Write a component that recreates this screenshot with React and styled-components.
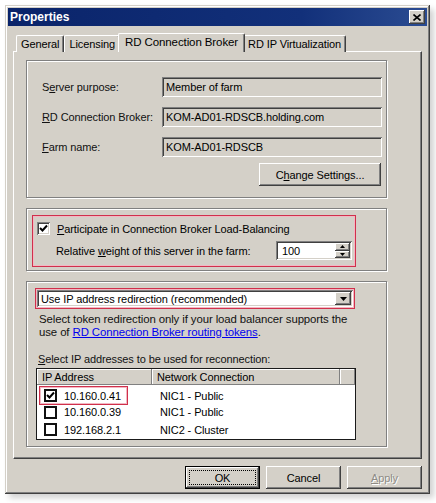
import React from 'react';
import styled, { createGlobalStyle, css } from 'styled-components';

const GlobalStyle = createGlobalStyle`
  html, body {
    margin: 0;
    padding: 0;
    background: #ffffff;
  }
  body {
    font-family: "Liberation Sans", Arial, sans-serif;
    font-size: 11px;
    letter-spacing: -0.1px;
    color: #000;
  }
`;

const face = '#d4d0c8';

const raised = css`
  box-shadow: inset -1px -1px #404040, inset 1px 1px #ffffff,
    inset -2px -2px #808080, inset 2px 2px ${face};
`;

const sunken = css`
  box-shadow: inset 1px 1px #808080, inset -1px -1px #ffffff,
    inset 2px 2px #404040, inset -2px -2px ${face};
`;

const Page = styled.div`
  padding: 5px 0 0 5px;
  width: 436px;
  height: 503px;
  box-sizing: border-box;
`;

const Window = styled.div`
  width: 425px;
  height: 489px;
  box-sizing: border-box;
  padding: 3px;
  background: ${face};
  box-shadow: inset -1px -1px #404040, inset 1px 1px ${face},
    inset -2px -2px #808080, inset 2px 2px #ffffff,
    4px 4px 6px rgba(0, 0, 0, 0.18);
  display: flex;
  flex-direction: column;
`;

const TitleBar = styled.div`
  height: 18px;
  background: linear-gradient(to right, #0a246a 0%, #12307a 70%, #2b4c92 100%);
  display: flex;
  align-items: center;
  justify-content: space-between;
  padding: 0 2px;
`;

const Title = styled.span`
  color: #fff;
  font-weight: bold;
  font-size: 12px;
  letter-spacing: 0;
`;

const CloseBox = styled.div`
  width: 16px;
  height: 14px;
  background: ${face};
  ${raised};
  display: flex;
  align-items: center;
  justify-content: center;
`;

const Body = styled.div`
  padding: 7px 5px 0 5px;
  display: flex;
  flex-direction: column;
  flex: 1;
`;

const TabStrip = styled.div`
  display: flex;
  align-items: flex-end;
  padding-left: 3px;
  height: 19px;
  position: relative;
  z-index: 1;
`;

const Tab = styled.div`
  height: ${(p) => (p.$active ? 19 : 17)}px;
  padding: 0 ${(p) => (p.$active ? 6 : 4)}px;
  margin: 0 ${(p) => (p.$active ? -2 : 0)}px;
  padding-bottom: ${(p) => (p.$active ? 2 : 0)}px;
  box-sizing: border-box;
  display: flex;
  align-items: center;
  background: ${face};
  border-top: 1px solid #fff;
  border-left: 1px solid #fff;
  border-right: 1px solid #404040;
  box-shadow: inset -1px 0 #808080;
  border-radius: 2px 2px 0 0;
  font-size: ${(p) => (p.$active ? 11.5 : 11)}px;
  position: relative;
  z-index: ${(p) => (p.$active ? 2 : 1)};
`;

const TabPage = styled.div`
  height: 408px;
  box-sizing: border-box;
  margin-top: -1px;
  border-top: 1px solid #fff;
  border-left: 1px solid #fff;
  border-right: 1px solid #404040;
  border-bottom: 1px solid #404040;
  box-shadow: inset -1px -1px #808080;
  padding: 8px 34px 0 12px;
  display: flex;
  flex-direction: column;
  gap: 10px;
`;

const Group = styled.div`
  border: 1px solid #808080;
  box-shadow: inset 1px 1px #fff, 1px 1px #fff;
  height: ${(p) => p.$h}px;
  box-sizing: border-box;
  padding: ${(p) => p.$pad};
  display: flex;
  flex-direction: column;
`;

const FieldRow = styled.div`
  display: flex;
  align-items: center;
  height: 20px;
  margin-bottom: 10px;
`;

const FieldLabel = styled.span`
  width: 120px;
  color: #111;
`;

const ReadOnlyBox = styled.div`
  width: 220px;
  height: 20px;
  box-sizing: border-box;
  ${sunken};
  display: flex;
  align-items: center;
  padding-left: 4px;
`;

const Key = styled.span`
  text-decoration: underline;
  text-underline-offset: 1px;
`;

const PushButton = styled.button`
  width: ${(p) => p.$w}px;
  height: 23px;
  background: ${face};
  border: none;
  padding: 0;
  font-family: inherit;
  font-size: 11px;
  letter-spacing: -0.1px;
  color: ${(p) => (p.$disabled ? '#8e8b85' : '#000')};
  text-shadow: ${(p) => (p.$disabled ? '1px 1px #fff' : 'none')};
  ${(p) =>
    p.$default
      ? css`
          box-shadow: inset 0 0 0 1px #000, inset -2px -2px #404040,
            inset 2px 2px #ffffff, inset -3px -3px #808080;
        `
      : raised};
  display: flex;
  align-items: center;
  justify-content: center;
  position: relative;
`;

const FocusRing = styled.span`
  position: absolute;
  inset: 4px;
  border: 1px dotted #000;
`;

const ButtonEnd = styled.div`
  display: flex;
  justify-content: flex-end;
  padding-right: 5px;
  margin-top: -4px;
`;

const Annotation = styled.div`
  border: 1px solid #d0304c;
  box-shadow: inset 0 0 0 1px #f2b8c2;
  box-sizing: border-box;
`;

const LoadBalanceBox = styled(Annotation)`
  width: 324px;
  height: 52px;
  padding: 6px 0 0 4px;
  display: flex;
  flex-direction: column;
  gap: 6px;
`;

const CheckRow = styled.div`
  display: flex;
  align-items: center;
  gap: 7px;
`;

const Check3D = styled.div`
  width: 13px;
  height: 13px;
  box-sizing: border-box;
  background: #fff;
  ${sunken};
  display: flex;
  align-items: center;
  justify-content: center;
`;

const WeightRow = styled.div`
  display: flex;
  align-items: center;
  padding-left: 19px;
`;

const SpinBox = styled.div`
  margin-left: auto;
  margin-right: 3px;
  width: 76px;
  height: 19px;
  box-sizing: border-box;
  background: #fff;
  ${sunken};
  display: flex;
  align-items: center;
  padding: 2px 2px 2px 6px;
`;

const SpinButtons = styled.div`
  margin-left: auto;
  width: 15px;
  height: 15px;
  display: flex;
  flex-direction: column;
`;

const SpinPart = styled.div`
  flex: 1;
  background: ${face};
  ${raised};
  display: flex;
  align-items: center;
  justify-content: center;
`;

const ComboWrap = styled(Annotation)`
  width: 320px;
  height: 21px;
  padding: 1px;
  margin-left: -1px;
`;

const Combo = styled.div`
  height: 100%;
  background: #fff;
  ${sunken};
  display: flex;
  align-items: center;
  padding: 2px;
  box-sizing: border-box;
`;

const ComboText = styled.span`
  flex: 1;
  padding-left: 2px;
`;

const DropButton = styled.div`
  width: 16px;
  height: 100%;
  background: ${face};
  ${raised};
  display: flex;
  align-items: center;
  justify-content: center;
`;

const Hint = styled.p`
  margin: 4px 0 0 3px;
  font-size: 11.4px;
  line-height: 13px;
  color: #111;
`;

const LinkText = styled.a`
  color: #0000ee;
  text-decoration: underline;
`;

const ListCaption = styled.div`
  margin: 14px 0 3px 2px;
  color: #111;
`;

const ListView = styled.div`
  width: 320px;
  height: 72px;
  box-sizing: border-box;
  border: 1px solid #1a1a1a;
  background: #fff;
`;

const HeaderRow = styled.div`
  display: grid;
  grid-template-columns: 115px 188px 1fr;
  height: 16px;
  margin-bottom: 1px;
`;

const HeaderCell = styled.div`
  background: ${face};
  box-shadow: inset -1px -1px #808080, inset 1px 1px #fff;
  padding-left: 5px;
  display: flex;
  align-items: center;
  overflow: hidden;
  white-space: nowrap;
`;

const ItemRow = styled.div`
  display: grid;
  grid-template-columns: 115px 188px;
  height: 17.5px;
  align-items: center;
`;

const ItemCell = styled.div`
  display: flex;
  align-items: center;
  gap: 7px;
  padding-left: ${(p) => p.$pad || 0}px;
`;

const ItemMark = styled(Annotation)`
  display: flex;
  align-items: center;
  gap: 7px;
  height: 19px;
  width: 89px;
  margin-left: 2px;
  padding-left: 4px;
`;

const ListCheck = styled.div`
  width: 13px;
  height: 13px;
  box-sizing: border-box;
  border: 2px solid #111;
  background: #fff;
  display: flex;
  align-items: center;
  justify-content: center;
`;

const Footer = styled.div`
  display: flex;
  justify-content: flex-end;
  gap: 6px;
  padding-top: 7px;
`;

const Tick = () => (
  <svg width="9" height="9" viewBox="0 0 9 9">
    <path d="M1 4 L3.5 6.5 L8 1.5" stroke="#000" strokeWidth="2" fill="none" />
  </svg>
);

const Arrow = ({ up, size = 7 }) => (
  <svg width={size} height={Math.ceil(size / 2)} viewBox="0 0 7 4">
    <path d={up ? 'M0 4 L3.5 0 L7 4 Z' : 'M0 0 L7 0 L3.5 4 Z'} fill="#000" />
  </svg>
);

const CloseGlyph = () => (
  <svg width="8" height="7" viewBox="0 0 8 7">
    <path d="M0.5 0.5 L7.5 6.5 M7.5 0.5 L0.5 6.5" stroke="#000" strokeWidth="1.6" />
  </svg>
);

const addresses = [
  { ip: '10.160.0.41', nic: 'NIC1 - Public', on: true },
  { ip: '10.160.0.39', nic: 'NIC1 - Public', on: false },
  { ip: '192.168.2.1', nic: 'NIC2 - Cluster', on: false },
];

function AddressRow({ item }) {
  const box = <ListCheck>{item.on && <Tick />}</ListCheck>;
  return (
    <ItemRow>
      {item.on ? (
        <ItemCell>
          <ItemMark>
            {box}
            {item.ip}
          </ItemMark>
        </ItemCell>
      ) : (
        <ItemCell $pad={7}>
          {box}
          {item.ip}
        </ItemCell>
      )}
      <ItemCell $pad={8}>{item.nic}</ItemCell>
    </ItemRow>
  );
}

export default function App() {
  return (
    <Page>
      <GlobalStyle />
      <Window>
        <TitleBar>
          <Title>Properties</Title>
          <CloseBox>
            <CloseGlyph />
          </CloseBox>
        </TitleBar>
        <Body>
          <TabStrip>
            <Tab>General</Tab>
            <Tab>Licensing</Tab>
            <Tab $active>RD Connection Broker</Tab>
            <Tab>RD IP Virtualization</Tab>
          </TabStrip>
          <TabPage>
            <Group $h={138} $pad="16px 0 0 15px">
              <FieldRow>
                <FieldLabel>
                  S<Key>e</Key>rver purpose:
                </FieldLabel>
                <ReadOnlyBox>Member of farm</ReadOnlyBox>
              </FieldRow>
              <FieldRow>
                <FieldLabel>
                  <Key>R</Key>D Connection Broker:
                </FieldLabel>
                <ReadOnlyBox>KOM-AD01-RDSCB.holding.com</ReadOnlyBox>
              </FieldRow>
              <FieldRow>
                <FieldLabel>
                  <Key>F</Key>arm name:
                </FieldLabel>
                <ReadOnlyBox>KOM-AD01-RDSCB</ReadOnlyBox>
              </FieldRow>
              <ButtonEnd>
                <PushButton $w={122}>
                  C<Key>h</Key>ange Settings...
                </PushButton>
              </ButtonEnd>
            </Group>
            <Group $h={63} $pad="6px 0 0 5px">
              <LoadBalanceBox>
                <CheckRow>
                  <Check3D>
                    <Tick />
                  </Check3D>
                  <span>
                    <Key>P</Key>articipate in Connection Broker Load-Balancing
                  </span>
                </CheckRow>
                <WeightRow>
                  <span>
                    Relative <Key>w</Key>eight of this server in the farm:
                  </span>
                  <SpinBox>
                    100
                    <SpinButtons>
                      <SpinPart>
                        <Arrow up size={5} />
                      </SpinPart>
                      <SpinPart>
                        <Arrow size={5} />
                      </SpinPart>
                    </SpinButtons>
                  </SpinBox>
                </WeightRow>
              </LoadBalanceBox>
            </Group>
            <Group $h={166} $pad="6px 0 0 9px">
              <ComboWrap>
                <Combo>
                  <ComboText>Use IP address redirection (recommended)</ComboText>
                  <DropButton>
                    <Arrow />
                  </DropButton>
                </Combo>
              </ComboWrap>
              <Hint>
                Select token redirection only if your load balancer supports the
                <br />
                use of <LinkText href="#">RD Connection Broker routing tokens</LinkText>.
              </Hint>
              <ListCaption>
                <Key>S</Key>elect IP addresses to be used for reconnection:
              </ListCaption>
              <ListView>
                <HeaderRow>
                  <HeaderCell>IP Address</HeaderCell>
                  <HeaderCell>Network Connection</HeaderCell>
                  <HeaderCell />
                </HeaderRow>
                {addresses.map((a) => (
                  <AddressRow key={a.ip} item={a} />
                ))}
              </ListView>
            </Group>
          </TabPage>
          <Footer>
            <PushButton $w={75} $default>
              <FocusRing />
              OK
            </PushButton>
            <PushButton $w={75}>Cancel</PushButton>
            <PushButton $w={75} $disabled>
              <Key>A</Key>pply
            </PushButton>
          </Footer>
        </Body>
      </Window>
    </Page>
  );
}
